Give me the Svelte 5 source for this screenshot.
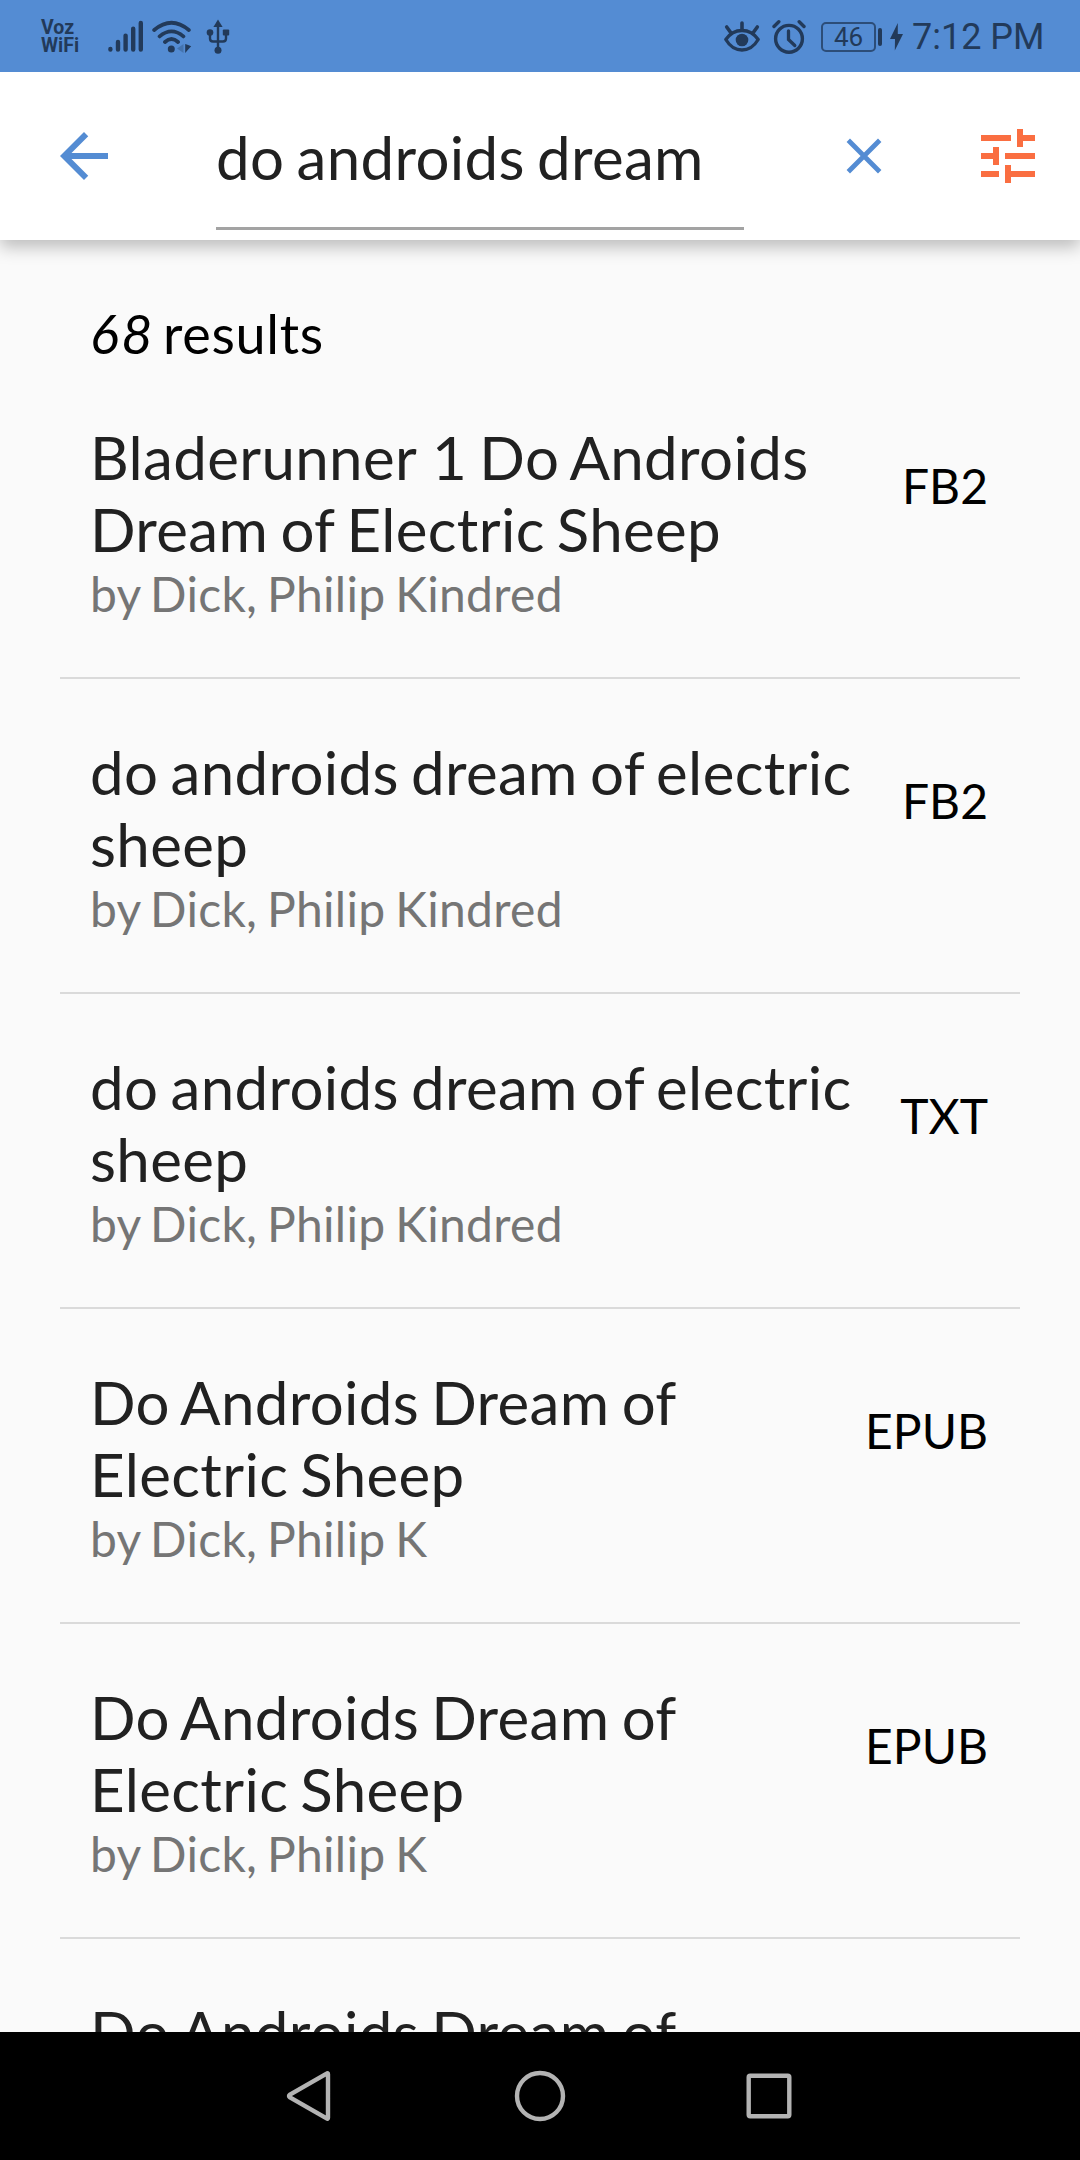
<script>
  const results = [
    { title: 'Bladerunner 1 Do Androids Dream of Electric Sheep', author: 'Dick, Philip Kindred', format: 'FB2' },
    { title: 'do androids dream of electric sheep', author: 'Dick, Philip Kindred', format: 'FB2' },
    { title: 'do androids dream of electric sheep', author: 'Dick, Philip Kindred', format: 'TXT' },
    { title: 'Do Androids Dream of Electric Sheep', author: 'Dick, Philip K', format: 'EPUB' },
    { title: 'Do Androids Dream of Electric Sheep', author: 'Dick, Philip K', format: 'EPUB' },
    { title: 'Do Androids Dream of Electric Sheep', author: 'Dick, Philip K', format: 'EPUB' }
  ];

  // Numbers inside a title are spaced separately from the words around them.
  const parts = (title) => title.split(/(\d+)/);
</script>

<div class="screen">
  <div class="status">
    <div class="carrier"><span>Voz</span><span>WiFi</span></div>
    <svg class="signal" width="36" height="34" viewBox="0 0 36 34">
      <g stroke="currentColor" stroke-width="4.4" stroke-linecap="round">
        <path d="M2.4 29v.6M10 22v7.6M17.6 15.6v14M25.2 8.8v20.8M32.8 3v26.6" />
      </g>
    </svg>
    <svg class="wifi" width="40" height="34" viewBox="0 0 40 34">
      <g fill="none" stroke="currentColor" stroke-width="3.8" stroke-linecap="round">
        <path d="M2.2 10Q19.5-4.5 36.8 10M7.6 16.4Q19.5 6.4 31.4 16.4M13 22Q19.5 16 26 22" />
      </g>
      <circle cx="19.3" cy="29" r="3.5" fill="currentColor" />
      <path d="M31.5 24v9l-6.5-4.5z" fill="currentColor" opacity=".3" />
      <path d="M33.2 24v9l3-3.5 3-3.2-3-1.3z" fill="currentColor" />
    </svg>
    <svg class="usb" width="24" height="36" viewBox="0 0 24 36">
      <g fill="none" stroke="currentColor" stroke-width="2.4">
        <path d="M12 5v26M4 13v6.5q0 3 3 3h10q3 0 3-3V13" />
      </g>
      <g fill="currentColor">
        <path d="M12 .5l4.6 7.5H7.4z" />
        <circle cx="4" cy="13.6" r="3.3" />
        <rect x="16.8" y="10.4" width="6.4" height="6.2" rx="1" />
        <circle cx="12" cy="31.2" r="3.5" />
      </g>
    </svg>
    <div class="gap"></div>
    <svg class="eye" width="36" height="34" viewBox="0 0 36 34">
      <g fill="none" stroke="currentColor" stroke-width="3.3" stroke-linecap="round">
        <path d="M1.8 19.5Q8 10.5 18 10.5t16.2 9Q28 30 18 30T1.8 19.5z" stroke-linejoin="round" />
        <path d="M18 3v7M2.7 7l4 5.5M33.3 7l-4 5.5" stroke-width="3.6" />
      </g>
      <circle cx="18" cy="20" r="6.3" fill="currentColor" />
    </svg>
    <svg class="alarm" width="34" height="34" viewBox="0 0 34 34">
      <g fill="none" stroke="currentColor" stroke-width="3.4">
        <circle cx="17" cy="18.8" r="13.4" />
        <path d="M16.5 11v8.5l6.3 6" stroke-width="3.3" stroke-linecap="round" />
        <path d="M2 6.5l4.8-4.7M32 6.5l-4.8-4.7" stroke-linecap="round" />
      </g>
    </svg>
    <div class="battery">46</div>
    <div class="tip"></div>
    <svg class="bolt" width="13" height="28" viewBox="0 0 13 28">
      <path d="M7.8 0L0 16h5L4.8 27.5 13 11H7.8z" fill="currentColor" />
    </svg>
    <div class="time">7:12 PM</div>
  </div>

  <header>
    <svg class="back" width="72" height="72" viewBox="0 0 24 24">
      <path fill="currentColor" d="M20 11H7.83l5.59-5.59L12 4l-8 8 8 8 1.41-1.41L7.83 13H20v-2z" />
    </svg>
    <div class="field">do androids dream</div>
    <svg class="clear" width="36" height="36" viewBox="0 0 36 36">
      <path d="M2.3 2.3l31.4 31.4M33.7 2.3L2.3 33.7" stroke="currentColor" stroke-width="4.8" />
    </svg>
    <svg class="tune" width="72" height="72" viewBox="0 0 24 24">
      <path fill="currentColor" d="M3 17v2h6v-2H3zM3 5v2h10V5H3zm10 16v-2h8v-2h-8v-2h-2v6h2zM7 9v2H3v2h4v2h2V9H7zm14 4v-2H11v2h10zm-6-4h2V7h4V5h-4V3h-2v6z" />
    </svg>
  </header>

  <main>
    <p class="count"><em>68</em> <span>results</span></p>
    {#each results as item}
      <div class="row">
        <div class="info">
          <div class="title">{#each parts(item.title) as part, i}<span class:number={i % 2 === 1}>{part}</span>{/each}</div>
          <div class="author">by {item.author}</div>
        </div>
        <div class="format">{item.format}</div>
      </div>
    {/each}
  </main>

  <nav>
    <svg width="50" height="54" viewBox="0 0 50 54">
      <path d="M43 5.2V48.8q0 1.5-1.4.6L5 28.5q-2-1.5 0-3L41.6 4.6q1.4-.9 1.4.6z" />
    </svg>
    <svg width="54" height="54" viewBox="0 0 54 54">
      <circle cx="27" cy="27" r="23" />
    </svg>
    <svg width="50" height="54" viewBox="0 0 50 54">
      <rect x="3.7" y="6.8" width="40.6" height="40.4" rx="1.5" />
    </svg>
  </nav>
</div>

<style>
  :global(body) {
    margin: 0;
  }
  .screen {
    width: 1080px;
    height: 2160px;
    display: flex;
    flex-direction: column;
    overflow: hidden;
    background: #fafafa;
    font-family: Lato, sans-serif;
    color: #212121;
  }
  svg {
    display: block;
    flex: none;
  }
  .status {
    position: relative;
    z-index: 2;
    flex: none;
    height: 72px;
    box-sizing: border-box;
    padding: 2px 36px 0 41px;
    display: flex;
    align-items: center;
    background: #548cd3;
    color: #223a5a;
    font-family: Roboto, sans-serif;
  }
  .carrier {
    display: flex;
    flex-direction: column;
    width: 67px;
    font-size: 19.5px;
    line-height: 18px;
    font-weight: 700;
  }
  .wifi {
    margin-left: 8px;
  }
  .usb {
    margin-left: 14px;
  }
  .gap {
    flex: 1;
  }
  .alarm {
    margin-left: 12px;
  }
  .battery {
    margin-left: 15px;
    width: 51px;
    height: 26px;
    border: 2px solid #2c4d78;
    border-radius: 5px;
    font-size: 26px;
    line-height: 27px;
    text-align: center;
  }
  .tip {
    margin-left: 2px;
    width: 4px;
    height: 18px;
    border-radius: 2px;
    background: #223a5a;
  }
  .bolt {
    margin-left: 8px;
  }
  .time {
    margin-left: 9px;
    width: 132px;
    font-size: 36px;
    line-height: 44px;
    white-space: nowrap;
  }
  header {
    position: relative;
    z-index: 1;
    flex: none;
    height: 168px;
    box-sizing: border-box;
    padding: 0 36px 0 48px;
    display: flex;
    align-items: center;
    background: #fff;
    box-shadow: 0 7px 16px rgba(0, 0, 0, 0.25);
    color: #548cd3;
  }
  .field,
  .title,
  .author {
    letter-spacing: 0.006em;
    word-spacing: -0.06em;
  }
  .field {
    margin-left: 96px;
    width: 528px;
    height: 158px;
    align-self: flex-start;
    box-sizing: border-box;
    padding-top: 49px;
    border-bottom: 3px solid #a3a3a3;
    font-size: 60px;
    line-height: 72px;
    color: #212121;
    white-space: nowrap;
  }
  .clear {
    margin-left: 102px;
  }
  .tune {
    margin-left: auto;
    color: #fa6e41;
  }
  main {
    flex: 1;
    min-height: 0;
    overflow: hidden;
    padding: 0 60px;
  }
  .count {
    margin: 0;
    padding: 61px 30px 0;
    height: 63px;
    font-size: 54px;
    line-height: 65px;
    word-spacing: -6px;
    color: #000;
  }
  .count em {
    letter-spacing: 2.5px;
  }
  .count span {
    letter-spacing: 0.7px;
  }
  .row {
    height: 313px;
    border-bottom: 2px solid #dadada;
    padding: 0 32px 0 30px;
    display: flex;
    justify-content: space-between;
  }
  .info {
    padding-top: 57px;
    width: 770px;
  }
  .title {
    font-size: 60px;
    line-height: 72px;
  }
  .number {
    margin: 0 0 0 4px;
  }
  .author {
    font-size: 48px;
    line-height: 58px;
    color: #757575;
  }
  .format {
    padding-top: 93px;
    font-size: 48px;
    line-height: 58px;
    color: #000;
  }
  nav {
    flex: none;
    height: 128px;
    background: #000;
    display: flex;
    justify-content: center;
    align-items: center;
    gap: 178px;
  }
  nav svg {
    fill: none;
    stroke: #b3b3b3;
    stroke-width: 4.4;
  }
</style>
